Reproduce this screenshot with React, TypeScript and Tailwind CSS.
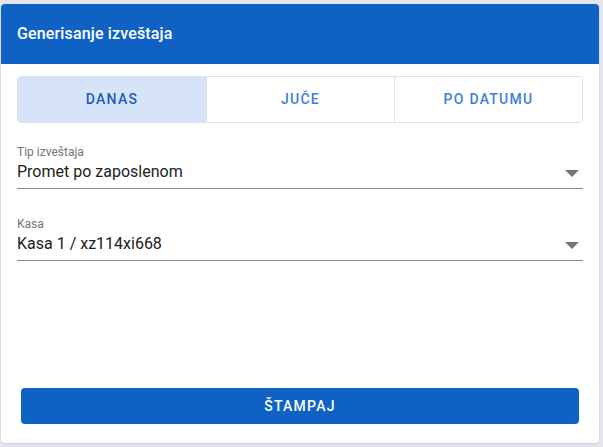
import React, { useState } from "react"

const tabs = ["DANAS", "JUČE", "PO DATUMU"]

function Caret() {
  return (
    <svg width="14" height="7" viewBox="0 0 14 7" className="mr-[4px] mt-[3px] shrink-0">
      <path d="M0 0h14L7 7z" fill="#757575" />
    </svg>
  )
}

function SelectField({ label, value, className = "" }: { label: string; value: string; className?: string }) {
  return (
    <div className={className}>
      <div className="text-[12px] leading-[14px] text-[#757575]">{label}</div>
      <div className="flex items-center justify-between pt-[1px] pb-[4px] border-b border-[#8c8c8c]">
        <span className="text-[16px] leading-6 text-[#212121]">{value}</span>
        <Caret />
      </div>
    </div>
  )
}

export default function App() {
  const [active, setActive] = useState(0)

  return (
    <div className="h-[447px] w-full bg-[#e6e6f1] pt-[4px] pl-[1px] pr-[4px] font-['Roboto',sans-serif]">
      <div className="flex h-[439px] flex-col overflow-hidden rounded bg-white shadow-sm">
        <div className="flex h-[60px] items-center bg-[#1061c4] px-4">
          <h1 className="text-[16px] font-medium tracking-[0.15px] text-white">Generisanje izveštaja</h1>
        </div>

        <div className="flex flex-1 flex-col px-4 pt-3">
          {/* report period tabs */}
          <div className="grid h-[47px] grid-cols-3 overflow-hidden rounded border border-[#e0e0e0]">
            {tabs.map((t, i) => (
              <button
                key={t}
                onClick={() => setActive(i)}
                className={
                  i === active
                    ? "bg-[#d6e3f8] text-[14px] font-medium tracking-[1.25px] text-[#1a5cbf]"
                    : "border-l border-[#e0e0e0] bg-white text-[14px] font-medium tracking-[1.25px] text-[#3f7fd6]"
                }
              >
                {t}
              </button>
            ))}
          </div>

          <SelectField label="Tip izveštaja" value="Promet po zaposlenom" className="mt-[22px]" />
          <SelectField label="Kasa" value="Kasa 1 / xz114xi668" className="mt-[28px]" />

          <div className="mt-auto px-1 pb-[19px]">
            <button className="h-[36px] w-full rounded bg-[#1061c4] text-[14px] font-medium tracking-[1.25px] text-white">
              ŠTAMPAJ
            </button>
          </div>
        </div>
      </div>
    </div>
  )
}
